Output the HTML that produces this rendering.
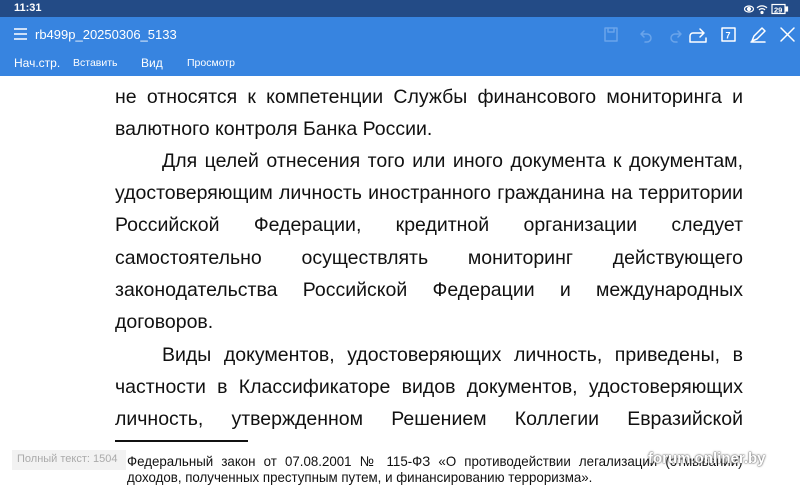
<!DOCTYPE html>
<html><head><meta charset="utf-8"><style>
*{margin:0;padding:0;box-sizing:border-box}
body{width:800px;height:480px;overflow:hidden;background:#fff;font-family:"Liberation Sans",sans-serif;position:relative}
#sb{position:absolute;left:0;top:0;width:800px;height:17px;background:#234b86;color:#fff;font-size:11px;font-weight:bold}
#tb{position:absolute;left:0;top:17px;width:800px;height:59px;background:#3784e0;color:#fff}
.l{position:absolute;left:115px;width:628px;font-size:19.5px;color:#111;white-space:nowrap;line-height:24px}
.j{text-align:justify;text-align-last:justify}
.fn{position:absolute;left:127px;width:648px;font-size:14px;color:#111;white-space:nowrap;line-height:16px;transform:scaleX(.95);transform-origin:left}
</style></head><body>
<div id="sb"><span style="position:absolute;left:14px;top:2px">11:31</span>
<svg style="position:absolute;left:744px;top:3px" width="52" height="12" viewBox="0 0 52 12" fill="none" stroke="#fff" stroke-width="1.2"><ellipse cx="5" cy="6" rx="4.5" ry="3"/><circle cx="5" cy="6" r="1.5" fill="#fff"/><path d="M13 5a7 7 0 0 1 10 0M15 7a4 4 0 0 1 6 0"/><circle cx="18" cy="9.5" r="1" fill="#fff"/><rect x="28" y="1.5" width="13" height="9"/><rect x="42" y="4" width="1.5" height="4" fill="#fff"/><text x="30" y="9.5" font-size="7.5" fill="#fff" stroke="none" font-family="Liberation Sans">29</text></svg></div>
<div id="tb">
<svg style="position:absolute;left:14px;top:11px" width="13" height="12" stroke="#fff" stroke-width="1.5"><path d="M0 1h13M0 6h13M0 11h13"/></svg>
<span style="position:absolute;left:35px;top:10px;font-size:13px">rb499p_20250306_5133</span>
<span style="position:absolute;left:14px;top:39px;font-size:12px">Нач.стр.</span>
<span style="position:absolute;left:73px;top:40px;font-size:10.5px">Вставить</span>
<span style="position:absolute;left:141px;top:39px;font-size:12px">Вид</span>
<span style="position:absolute;left:187px;top:40px;font-size:10.5px">Просмотр</span>
<svg style="position:absolute;left:600px;top:8px" width="196" height="20" fill="none" stroke-width="1.5" stroke-linecap="round" stroke-linejoin="round">
<g stroke="#6aa4ea"><rect x="5" y="3" width="12" height="13"/><path d="M8 3v4h6V3"/><path d="M44 6l-3 3 3 3M41 9h6a4 4 0 0 1 0 8h-2"/><path d="M78 6l3 3-3 3M81 9h-6a4 4 0 0 0 0 8h2"/></g>
<g stroke="#fff"><path d="M90 17v-6a3 3 0 0 1 3-3h10M100 4l4 4-4 4M90 17h16v-4"/><rect x="122" y="3" width="13" height="13"/><path d="M152 16l2-5 8-8 3 3-8 8zM151 17h14"/><path d="M181 3l13 13M194 3l-13 13"/></g>
<text x="125.5" y="13.5" font-size="9" fill="#fff" font-family="Liberation Sans" font-weight="bold">7</text></svg>
</div>
<div class="l j" style="top:85px">не относятся к компетенции Службы финансового мониторинга и</div>
<div class="l" style="top:117px">валютного контроля Банка России.</div>
<div class="l j" style="top:149px;left:162px;width:581px">Для целей отнесения того или иного документа к документам,</div>
<div class="l j" style="top:181px">удостоверяющим личность иностранного гражданина на территории</div>
<div class="l j" style="top:213px">Российской Федерации, кредитной организации следует</div>
<div class="l j" style="top:246px">самостоятельно осуществлять мониторинг действующего</div>
<div class="l j" style="top:278px">законодательства Российской Федерации и международных</div>
<div class="l" style="top:310px">договоров.</div>
<div class="l j" style="top:343px;left:162px;width:581px">Виды документов, удостоверяющих личность, приведены, в</div>
<div class="l j" style="top:375px">частности в Классификаторе видов документов, удостоверяющих</div>
<div class="l j" style="top:407px">личность, утвержденном Решением Коллегии Евразийской</div>
<div style="position:absolute;left:115px;top:440px;width:133px;height:2px;background:#111"></div>
<div style="position:absolute;left:12px;top:450px;width:114px;height:20px;background:#f2f2f2"></div>
<span style="position:absolute;left:17px;top:453px;font-size:11px;color:#aaa;white-space:nowrap">Полный текст: 1504</span>
<div class="fn j" style="top:453px">Федеральный закон от 07.08.2001 № 115-ФЗ «О противодействии легализации (отмывании)</div>
<div class="fn" style="top:469px">доходов, полученных преступным путем, и финансированию терроризма».</div>
<span style="position:absolute;left:648px;top:450px;font-size:15px;color:#fff;font-weight:bold;text-shadow:0 0 2px #555,0 0 1px #555">forum.onliner.by</span>
</body></html>
